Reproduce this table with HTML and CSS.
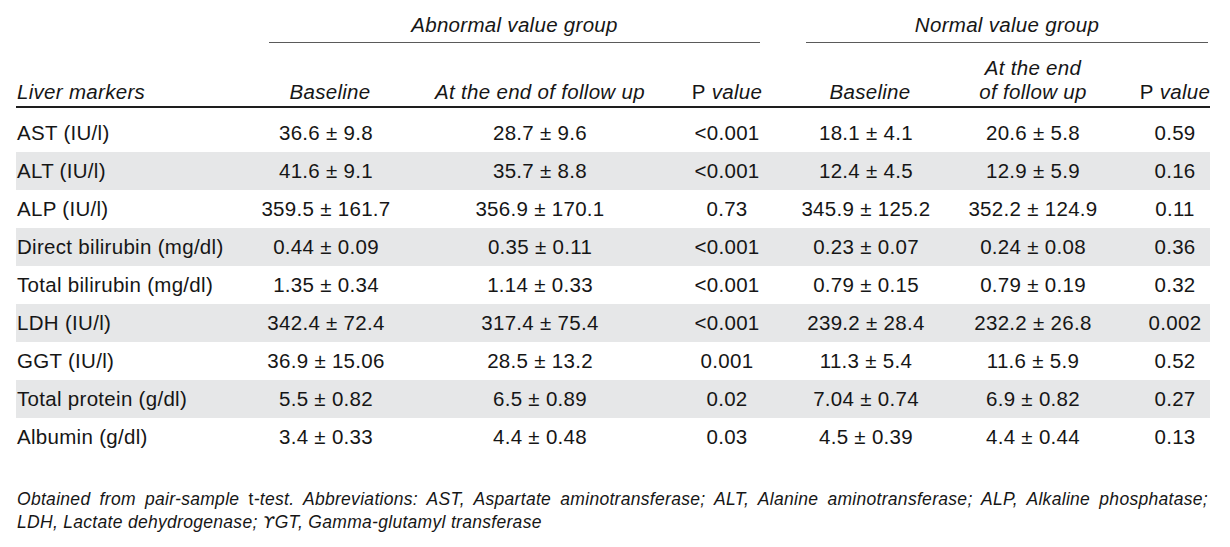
FILE: index.html
```html
<!DOCTYPE html>
<html lang="en">
<head>
<meta charset="utf-8">
<title>Liver markers</title>
<link rel="stylesheet" href="styles.css">
</head>
<body>
<div class="table">
  <div class="grid groups">
    <div class="group g1">Abnormal value group</div>
    <div class="group g2">Normal value group</div>
  </div>
  <div class="grid head">
    <div class="h left">Liver markers</div>
    <div class="h base">Baseline</div>
    <div class="h">At the end of follow up</div>
    <div class="h"><span class="up">P</span> value</div>
    <div class="h spacer"></div>
    <div class="h base">Baseline</div>
    <div class="h">At the end<br>of follow up</div>
    <div class="h"><span class="up">P</span> value</div>
  </div>
  <div class="body">
    <div class="grid row first"><div class="c left">AST (IU/l)</div><div class="c">36.6 ± 9.8</div><div class="c">28.7 ± 9.6</div><div class="c">&lt;0.001</div><div class="c"></div><div class="c">18.1 ± 4.1</div><div class="c">20.6 ± 5.8</div><div class="c">0.59</div></div>
    <div class="grid row alt"><div class="c left">ALT (IU/l)</div><div class="c">41.6 ± 9.1</div><div class="c">35.7 ± 8.8</div><div class="c">&lt;0.001</div><div class="c"></div><div class="c">12.4 ± 4.5</div><div class="c">12.9 ± 5.9</div><div class="c">0.16</div></div>
    <div class="grid row"><div class="c left">ALP (IU/l)</div><div class="c">359.5 ± 161.7</div><div class="c">356.9 ± 170.1</div><div class="c">0.73</div><div class="c"></div><div class="c">345.9 ± 125.2</div><div class="c">352.2 ± 124.9</div><div class="c">0.11</div></div>
    <div class="grid row alt"><div class="c left">Direct bilirubin (mg/dl)</div><div class="c">0.44 ± 0.09</div><div class="c">0.35 ± 0.11</div><div class="c">&lt;0.001</div><div class="c"></div><div class="c">0.23 ± 0.07</div><div class="c">0.24 ± 0.08</div><div class="c">0.36</div></div>
    <div class="grid row"><div class="c left">Total bilirubin (mg/dl)</div><div class="c">1.35 ± 0.34</div><div class="c">1.14 ± 0.33</div><div class="c">&lt;0.001</div><div class="c"></div><div class="c">0.79 ± 0.15</div><div class="c">0.79 ± 0.19</div><div class="c">0.32</div></div>
    <div class="grid row alt"><div class="c left">LDH (IU/l)</div><div class="c">342.4 ± 72.4</div><div class="c">317.4 ± 75.4</div><div class="c">&lt;0.001</div><div class="c"></div><div class="c">239.2 ± 28.4</div><div class="c">232.2 ± 26.8</div><div class="c">0.002</div></div>
    <div class="grid row"><div class="c left">GGT (IU/l)</div><div class="c">36.9 ± 15.06</div><div class="c">28.5 ± 13.2</div><div class="c">0.001</div><div class="c"></div><div class="c">11.3 ± 5.4</div><div class="c">11.6 ± 5.9</div><div class="c">0.52</div></div>
    <div class="grid row alt"><div class="c left">Total protein (g/dl)</div><div class="c">5.5 ± 0.82</div><div class="c">6.5 ± 0.89</div><div class="c">0.02</div><div class="c"></div><div class="c">7.04 ± 0.74</div><div class="c">6.9 ± 0.82</div><div class="c">0.27</div></div>
    <div class="grid row"><div class="c left">Albumin (g/dl)</div><div class="c">3.4 ± 0.33</div><div class="c">4.4 ± 0.48</div><div class="c">0.03</div><div class="c"></div><div class="c">4.5 ± 0.39</div><div class="c">4.4 ± 0.44</div><div class="c">0.13</div></div>
  </div>
  <div class="note">
    <span class="line l1">Obtained from pair-sample <span class="up">t</span>-test. Abbreviations: AST, Aspartate aminotransferase; ALT, Alanine aminotransferase; ALP, Alkaline phosphatase;</span>
    <span class="line">LDH, Lactate dehydrogenase; <span class="gamma">ϒ</span>GT, Gamma-glutamyl transferase</span>
  </div>
</div>
</body>
</html>
```

FILE: styles.css
```css
html, body {
  margin: 0;
  padding: 0;
  background: #ffffff;
}
body {
  font-family: "Liberation Sans", Arial, Helvetica, sans-serif;
  color: #161616;
}
.table {
  width: 1194px;
  margin-left: 16px;
}
.grid {
  display: grid;
  grid-template-columns: 252px 116px 312px 62px 48px 120px 214px 70px;
}
.groups {
  padding-top: 14px;
  font-size: 20.5px;
  letter-spacing: 0.3px;
  font-style: italic;
  line-height: 22px;
}
.group {
  text-align: center;
  padding-bottom: 6px;
  border-bottom: 1px solid #5a5a5a;
}
.g1 {
  grid-column: 2 / 5;
  margin-left: 1px;
  margin-right: -2px;
}
.g2 {
  grid-column: 6 / 9;
  margin-right: 2px;
}
.head {
  margin-top: 13px;
  font-size: 20.5px;
  letter-spacing: 0.3px;
  font-style: italic;
  line-height: 24px;
  border-bottom: 2px solid #1e1e1e;
  padding-bottom: 2px;
}
.h {
  align-self: end;
  justify-self: center;
  text-align: center;
  white-space: nowrap;
}
.h.base {
  padding-left: 8px;
}
.h.left, .c.left {
  justify-self: start;
  padding-left: 1px;
}
.up {
  font-style: normal;
}
.gamma {
  font-family: "DejaVu Sans", sans-serif;
  font-style: italic;
  font-size: 0.95em;
}
.body {
  margin-top: 6px;
}
.row {
  height: 38px;
  align-items: center;
  font-size: 20.5px;
  letter-spacing: 0.3px;
}
.row.alt {
  background: #e6e7e8;
}
.c {
  justify-self: center;
  white-space: nowrap;
}
.note {
  margin-top: 32px;
  font-size: 17.5px;
  letter-spacing: 0.3px;
  line-height: 23px;
  font-style: italic;
  padding-left: 1px;
  padding-right: 2px;
}
.line {
  display: block;
  white-space: nowrap;
}
.l1 {
  white-space: normal;
  text-align: justify;
  text-align-last: justify;
}
```
